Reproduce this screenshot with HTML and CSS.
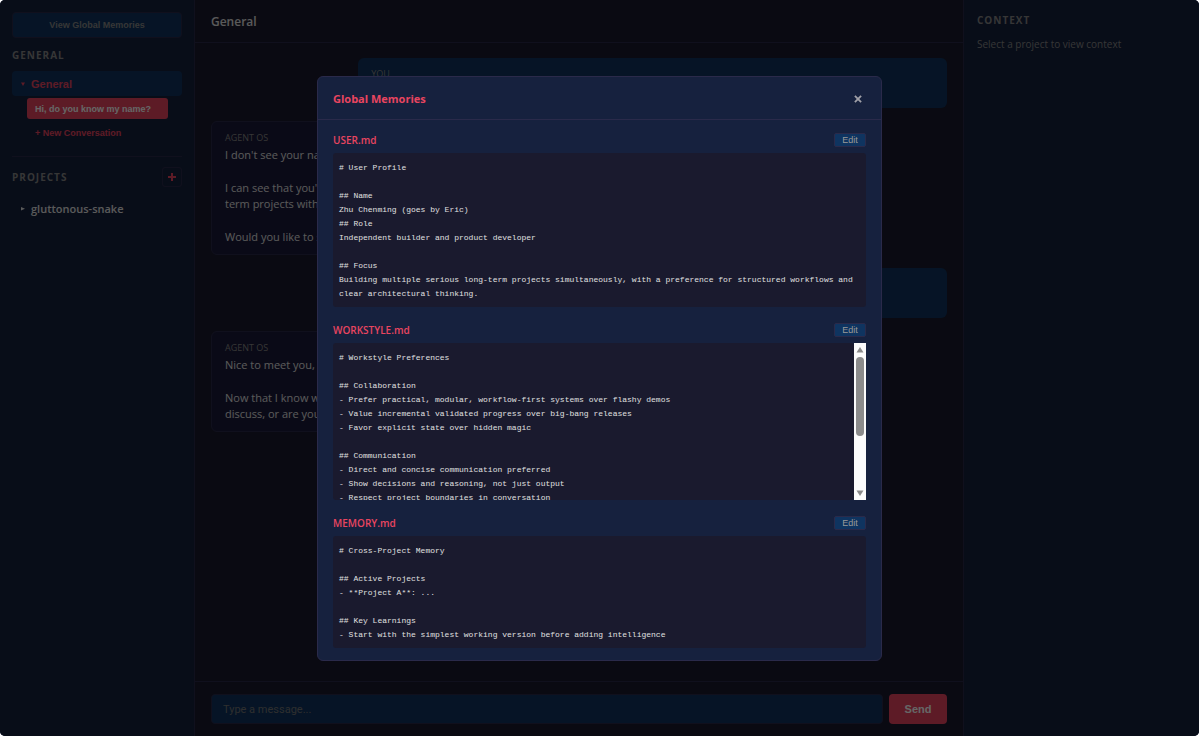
FILE: index.html
```html
<!DOCTYPE html>
<html lang="en">
<head>
<meta charset="utf-8">
<meta name="viewport" content="width=device-width, initial-scale=1">
<title>Agent OS</title>
<link rel="stylesheet" href="styles.css">
</head>
<body>
<div class="app">

  <aside class="sidebar">
    <button class="btn-memories" type="button">View Global Memories</button>
    <h2 class="side-title">General</h2>
    <button class="tree-item active" type="button">
      <svg class="arrow" viewBox="0 0 6 6"><path d="M1 1.5h4L3 5z"/></svg>General
    </button>
    <div class="conversations">
      <button class="conversation" type="button">Hi, do you know my name?</button>
      <button class="new-conversation" type="button">+ New Conversation</button>
    </div>
    <div class="projects-header">
      <h2 class="side-title">Projects</h2>
      <button class="btn-add" type="button" aria-label="Add project">
        <svg viewBox="0 0 8 8"><path d="M4 0v8M0 4h8"/></svg>
      </button>
    </div>
    <button class="tree-item project" type="button">
      <svg class="arrow" viewBox="0 0 6 6"><path d="M1 1v3.5l4-1.75z"/></svg>gluttonous-snake
    </button>
  </aside>

  <main class="chat">
    <header class="chat-header"><h1>General</h1></header>
    <div class="messages">
      <div class="message user">
        <div class="role">You</div>
      </div>
      <div class="message agent">
        <div class="role">Agent OS</div>
        <p>I don't see your name</p>
        <p>I can see that you're<br>term projects with s</p>
        <p>Would you like to s</p>
      </div>
      <div class="message user"></div>
      <div class="message agent">
        <div class="role">Agent OS</div>
        <p>Nice to meet you, E</p>
        <p>Now that I know w<br>discuss, or are you</p>
      </div>
    </div>
    <form class="composer">
      <input type="text" placeholder="Type a message..." aria-label="Message">
      <button type="submit">Send</button>
    </form>
  </main>

  <aside class="context">
    <h2>Context</h2>
    <p>Select a project to view context</p>
  </aside>

  <div class="overlay">
    <div class="modal" role="dialog" aria-labelledby="modal-title">
      <div class="modal-header">
        <h2 id="modal-title">Global Memories</h2>
        <button class="btn-close" type="button" aria-label="Close">
          <svg viewBox="0 0 9 9"><path d="M1 1l7 7M8 1l-7 7"/></svg>
        </button>
      </div>
      <div class="modal-body">
        <section class="memory">
          <div class="memory-header">
            <h3>USER.md</h3>
            <button class="btn-edit" type="button">Edit</button>
          </div>
          <pre>
# User Profile

## Name
Zhu Chenming (goes by Eric)
## Role
Independent builder and product developer

## Focus
Building multiple serious long-term projects simultaneously, with a preference for structured workflows and clear architectural thinking.</pre>
        </section>

        <section class="memory">
          <div class="memory-header">
            <h3>WORKSTYLE.md</h3>
            <button class="btn-edit" type="button">Edit</button>
          </div>
          <div class="scroll-box">
            <pre>
# Workstyle Preferences

## Collaboration
- Prefer practical, modular, workflow-first systems over flashy demos
- Value incremental validated progress over big-bang releases
- Favor explicit state over hidden magic

## Communication
- Direct and concise communication preferred
- Show decisions and reasoning, not just output
- Respect project boundaries in conversation</pre>
            <div class="scrollbar">
              <svg viewBox="0 0 8 6"><path d="M4 0l3.5 5.5h-7z"/></svg>
              <div class="scroll-track"><div class="scroll-thumb"></div></div>
              <svg viewBox="0 0 8 6"><path d="M.5.5h7L4 6z"/></svg>
            </div>
          </div>
        </section>

        <section class="memory">
          <div class="memory-header">
            <h3>MEMORY.md</h3>
            <button class="btn-edit" type="button">Edit</button>
          </div>
          <pre>
# Cross-Project Memory

## Active Projects
- **Project A**: ...

## Key Learnings
- Start with the simplest working version before adding intelligence</pre>
        </section>
      </div>
    </div>
  </div>

</div>
</body>
</html>
```

FILE: styles.css
```css
:root {
  --bg: #1a1a2e;
  --panel: #16213e;
  --accent: #0f3460;
  --red: #e94560;
  --border: #2a2a4a;
  --text: #e0e0e0;
  --muted: #888;
}

* {
  box-sizing: border-box;
  margin: 0;
  padding: 0;
}

body {
  background: #fff;
  color: var(--text);
  font-family: "Open Sans", "Noto Sans", sans-serif;
  font-size: 11px;
  line-height: 16px;
}

button, input {
  font-family: "Liberation Sans", Arial, sans-serif;
  font-size: 11px;
  border: none;
  background: none;
  color: inherit;
}

button {
  cursor: pointer;
}

.app {
  position: relative;
  display: flex;
  height: 100vh;
  background: var(--bg);
  border-radius: 5px;
  overflow: hidden;
}

/* sidebar */
.sidebar {
  display: flex;
  flex-direction: column;
  width: 195px;
  padding: 12px;
  background: var(--panel);
  border-right: 1px solid var(--border);
}

.btn-memories {
  height: 26px;
  background: var(--accent);
  border: 1px solid var(--border);
  border-radius: 4px;
  color: var(--muted);
  font-size: 9px;
  font-weight: bold;
}

.side-title {
  font-size: 10px;
  line-height: 16px;
  letter-spacing: 1px;
  text-transform: uppercase;
  color: var(--muted);
}

.btn-memories + .side-title {
  margin: 9px 0 8px;
}

.tree-item {
  display: flex;
  align-items: center;
  gap: 5px;
  height: 25px;
  padding: 0 8px;
  border-radius: 4px;
  font-size: 11px;
  font-weight: bold;
}

.tree-item.active {
  background: var(--accent);
  color: var(--red);
}

.tree-item.project {
  margin-top: 9px;
  font-family: "Open Sans", "Noto Sans", sans-serif;
  font-weight: 600;
}

.arrow {
  width: 6px;
  height: 6px;
  fill: currentColor;
}

.conversations {
  display: flex;
  flex-direction: column;
  align-items: flex-start;
  gap: 3px;
  padding: 2px 0 13px 15px;
  border-bottom: 1px solid var(--border);
}

.conversation, .new-conversation {
  height: 21px;
  padding: 0 8px;
  border-radius: 3px;
  font-size: 9px;
  font-weight: bold;
}

.conversation {
  width: 141px;
  text-align: left;
  background: var(--red);
  color: #fff;
}

.new-conversation {
  color: var(--red);
}

.projects-header {
  display: flex;
  align-items: center;
  justify-content: space-between;
  margin-top: 10px;
}

.btn-add {
  display: grid;
  place-items: center;
  width: 20px;
  height: 20px;
  border: 1px solid var(--border);
  border-radius: 3px;
}

.btn-add svg {
  width: 8px;
  height: 8px;
  stroke: var(--red);
  stroke-width: 2;
}

/* chat */
.chat {
  display: flex;
  flex: 1;
  flex-direction: column;
  min-width: 0;
}

.chat-header {
  padding: 14px 16px 12px;
  border-bottom: 1px solid var(--border);
}

.chat-header h1 {
  font-size: 12px;
  line-height: 16px;
  font-weight: 600;
}

.messages {
  display: flex;
  flex: 1;
  flex-direction: column;
  gap: 13px;
  padding: 15px 16px;
  overflow: hidden;
}

.message {
  width: 80%;
  min-height: 50px;
  padding: 9px 13px;
  border-radius: 6px;
}

.message.user {
  align-self: flex-end;
  background: var(--accent);
}

.message.agent {
  background: #1a1a3a;
  border: 1px solid var(--border);
}

.message p + p {
  margin-top: 17px;
}

.role {
  margin-bottom: 3px;
  font-size: 9px;
  line-height: 13px;
  text-transform: uppercase;
  color: var(--muted);
}

.composer {
  display: flex;
  gap: 6px;
  padding: 12px 16px;
  border-top: 1px solid var(--border);
}

.composer input {
  flex: 1;
  min-width: 0;
  height: 30px;
  padding: 0 11px;
  background: var(--accent);
  border: 1px solid var(--border);
  border-radius: 4px;
  font-family: Roboto, sans-serif;
}

.composer input::placeholder {
  color: #757575;
}

.composer button {
  width: 58px;
  background: var(--red);
  border-radius: 4px;
  color: #fff;
  font-weight: bold;
}

/* context panel */
.context {
  width: 236px;
  padding: 12px 13px;
  background: var(--panel);
  border-left: 1px solid var(--border);
  color: var(--muted);
}

.context h2 {
  margin-bottom: 8px;
  font-size: 10px;
  line-height: 16px;
  letter-spacing: 1px;
  text-transform: uppercase;
}

.context p {
  font-size: 10px;
}

/* modal */
.overlay {
  position: absolute;
  inset: 0;
  display: flex;
  align-items: center;
  justify-content: center;
  background: rgba(0, 0, 0, 0.6);
}

.modal {
  width: 100%;
  max-width: 565px;
  background: var(--panel);
  border: 1px solid var(--border);
  border-radius: 6px;
}

.modal-header {
  display: flex;
  align-items: center;
  justify-content: space-between;
  padding: 14px 15px 12px;
  border-bottom: 1px solid var(--border);
}

.modal-header h2 {
  font-size: 11px;
  line-height: 16px;
  font-weight: bold;
  color: var(--red);
}

.btn-close {
  display: grid;
  place-items: center;
  width: 17px;
  height: 14px;
}

.btn-close svg {
  width: 8px;
  height: 8px;
  fill: none;
  stroke: #a0a0a8;
  stroke-width: 2;
}

.modal-body {
  display: flex;
  flex-direction: column;
  gap: 16px;
  padding: 13px 15px 12px;
}

.memory-header {
  display: flex;
  align-items: center;
  justify-content: space-between;
  height: 14px;
  margin-bottom: 6px;
}

.memory-header h3 {
  font-size: 10px;
  line-height: 14px;
  font-weight: 600;
  color: var(--red);
}

.btn-edit {
  width: 32px;
  height: 14px;
  background: var(--accent);
  border: 1px solid var(--border);
  border-radius: 2px;
  color: #999;
  font-size: 9px;
  line-height: 12px;
}

.memory pre {
  padding: 8px 6px 6px;
  background: var(--bg);
  border-radius: 3px;
  font-family: "Liberation Mono", monospace;
  font-size: 8px;
  line-height: 14px;
  white-space: pre-wrap;
}

.scroll-box {
  display: flex;
  height: 157px;
  overflow: hidden;
}

.scroll-box pre {
  flex: 1;
}

.scrollbar {
  display: flex;
  flex-direction: column;
  align-items: center;
  gap: 4px;
  width: 12px;
  padding: 4px 0;
  background: #fcfcfc;
}

.scrollbar svg {
  width: 8px;
  height: 6px;
  fill: #8b8b8b;
}

.scroll-track {
  flex: 1;
}

.scroll-thumb {
  width: 8px;
  height: 62%;
  background: #8b8b8b;
  border-radius: 4px;
}
```
